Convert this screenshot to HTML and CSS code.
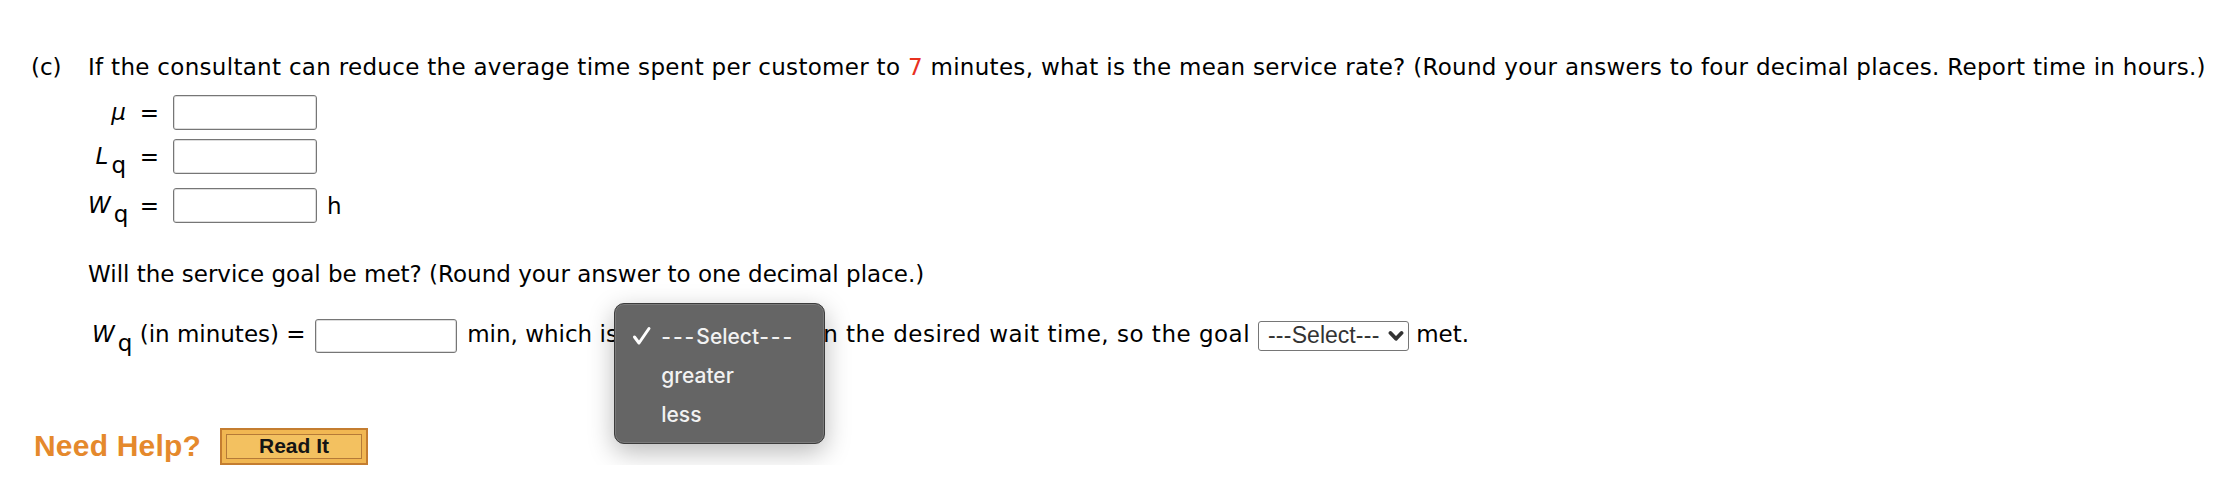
FILE: index.html
```html
<!DOCTYPE html>
<html>
<head>
<meta charset="utf-8">
<link rel="stylesheet" href="styles.css">
</head>
<body>
<div class="page">
  <div class="part">
    <span class="part-label">(c)</span>
    <div class="part-body">
      <p class="question">If the consultant can reduce the average time spent per customer to <span class="red">7</span> minutes, what is the mean service rate? (Round your answers to four decimal places. Report time in hours.)</p>
      <div class="eqs">
        <div class="eq">
          <span class="lhs"><i class="var">μ</i></span>
          <span class="eqsign">=</span>
          <span class="box"></span>
        </div>
        <div class="eq eq-l">
          <span class="lhs"><i class="var">L</i><span class="sub">q</span></span>
          <span class="eqsign">=</span>
          <span class="box"></span>
        </div>
        <div class="eq eq-w">
          <span class="lhs"><i class="var">W</i><span class="sub">q</span></span>
          <span class="eqsign">=</span>
          <span class="box"></span>
          <span class="unit">h</span>
        </div>
      </div>
      <p class="q2">Will the service goal be met? (Round your answer to one decimal place.)</p>
      <div class="wq-row"><span class="wq-var"><i class="var">W</i><span class="sub">q</span></span> (in minutes) = <span class="box box-wide"></span> min, which is <span class="select-wrap"><span class="select"><span class="sel-text"><span class="dash">---</span>Select<span class="dash">---</span></span><svg class="chev" width="16" height="12" viewBox="0 0 16 12"><path d="M2.5 3 L8 8.8 L13.5 3" fill="none" stroke="#333" stroke-width="3.8" stroke-linecap="round" stroke-linejoin="round"/></svg></span><span class="popup"><span class="opt"><svg class="check" width="20" height="20" viewBox="0 0 20 20"><path d="M2.5 11 L7 17 L17 2.5" fill="none" stroke="#fff" stroke-width="3" stroke-linecap="round" stroke-linejoin="round"/></svg><span class="dash-p">---</span>Select<span class="dash-p">---</span></span><span class="opt">greater</span><span class="opt">less</span></span></span><span class="wide"> than the desired wait time, so the goal </span><span class="select"><span class="sel-text"><span class="dash">---</span>Select<span class="dash">---</span></span><svg class="chev" width="16" height="12" viewBox="0 0 16 12"><path d="M2.5 3 L8 8.8 L13.5 3" fill="none" stroke="#333" stroke-width="3.8" stroke-linecap="round" stroke-linejoin="round"/></svg></span> met.</div>
    </div>
  </div>
  <div class="help">
    <span class="need-help">Need Help?</span>
    <span class="readit"><span class="readit-inner">Read It</span></span>
  </div>
</div>
</body>
</html>
```
FILE: styles.css
```css
body {
  margin: 0;
  background: #fff;
  font-family: "DejaVu Sans", Verdana, sans-serif;
  font-size: 23px;
  color: #000;
}
.page {
  padding: 52px 0 0 31px;
}
.part {
  display: flex;
}
.part-label {
  width: 57px;
  flex: none;
  line-height: 30px;
}
.question {
  margin: 0;
  line-height: 30px;
  white-space: nowrap;
  letter-spacing: 0.3px;
}
.red {
  color: #e8311f;
}
.eqs {
  margin-top: 13px;
  display: flex;
  flex-direction: column;
}
.eq {
  display: flex;
  align-items: center;
  height: 35px;
}
.eq.eq-l {
  margin-top: 9px;
}
.eq.eq-w {
  margin-top: 14px;
}
.lhs {
  width: 38px;
  text-align: right;
  line-height: 35px;
  white-space: nowrap;
}
.var {
  font-style: italic;
}
.sub {
  position: relative;
  top: 9px;
  margin-left: 3px;
}
.eqsign {
  width: 47px;
  text-align: center;
}
.box {
  display: inline-block;
  width: 144px;
  height: 35px;
  box-sizing: border-box;
  border: 1px solid #767676;
  box-shadow: inset 0 0 0 1px rgba(118, 118, 118, 0.25);
  border-radius: 3px;
  background: #fff;
  vertical-align: middle;
}
.unit {
  margin-left: 10px;
}
.q2 {
  margin: 36px 0 0;
  line-height: 30px;
  white-space: nowrap;
}
.wq-row {
  margin-top: 28px;
  line-height: 34px;
  white-space: nowrap;
  margin-left: 4px;
}
.box-wide {
  width: 142px;
  height: 34px;
  margin-left: 2px;
  margin-right: 3px;
}
.wide {
  letter-spacing: 0.5px;
}
.select-wrap {
  position: relative;
  display: inline-block;
  vertical-align: middle;
}
.select {
  display: inline-flex;
  align-items: center;
  justify-content: space-between;
  width: 151px;
  height: 30px;
  box-sizing: border-box;
  border: 1px solid #767676;
  border-radius: 3px;
  padding: 0 4px 0 9px;
  font-family: "Liberation Sans", Arial, sans-serif;
  font-size: 23px;
  color: #333;
  line-height: 1;
  vertical-align: middle;
  background: #fff;
  letter-spacing: 0;
}
.select-wrap .select {
  vertical-align: top;
}
.dash {
  letter-spacing: 0.3px;
}
.chev {
  flex: none;
}
.popup {
  position: absolute;
  left: -11px;
  top: -16px;
  width: 211px;
  height: 141px;
  box-sizing: border-box;
  padding: 13px 0 0 0;
  background: #656565;
  border: 1px solid #3c3c3c;
  box-shadow: inset 0 0 0 1px #7a7a7a, 0 8px 26px rgba(0, 0, 0, 0.28);
  border-radius: 10px;
  display: flex;
  flex-direction: column;
  font-family: Inter, "Liberation Sans", sans-serif;
  font-size: 21px;
  font-weight: 500;
  color: #f2f2f2;
  z-index: 5;
}
.dash-p {
  letter-spacing: 2px;
}
.opt {
  height: 39px;
  display: flex;
  align-items: center;
  padding-left: 46px;
  position: relative;
  line-height: 1;
}
.check {
  position: absolute;
  left: 17px;
  top: 9px;
}
.help {
  display: flex;
  align-items: center;
  margin-top: 75px;
  margin-left: 3px;
}
.need-help {
  font-family: "Liberation Sans", Arial, sans-serif;
  font-weight: bold;
  font-size: 30px;
  color: #e5892c;
  letter-spacing: 0.2px;
}
.readit {
  margin-left: 19px;
  width: 148px;
  height: 37px;
  box-sizing: border-box;
  border: 2px solid #c47d30;
  background: #f1b752;
  padding: 4px;
  display: flex;
}
.readit-inner {
  flex: 1;
  display: flex;
  align-items: center;
  justify-content: center;
  border: 1px solid #b57a38;
  background: #f3c160;
  font-family: "Liberation Sans", Arial, sans-serif;
  font-weight: bold;
  font-size: 21px;
  color: #151515;
}
```
